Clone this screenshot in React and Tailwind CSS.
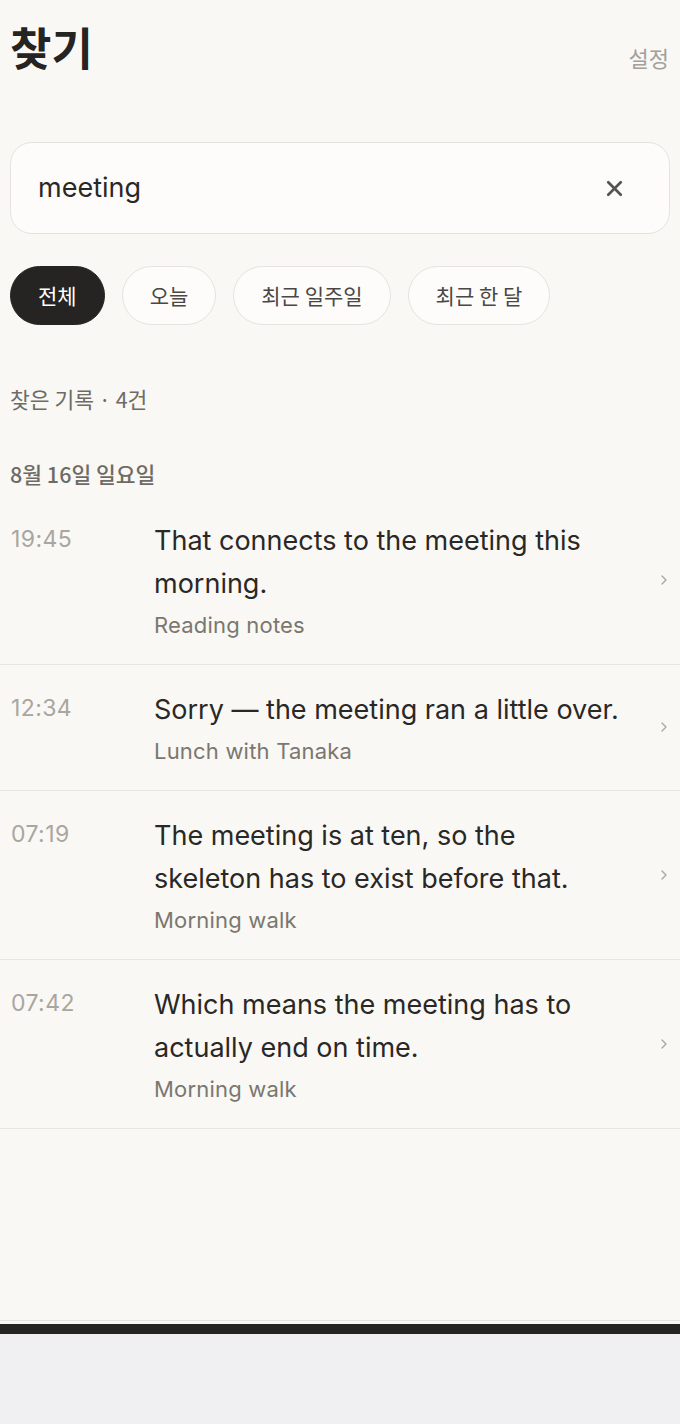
import { X, ChevronRight } from 'lucide-react';

const FILTERS = ['전체', '오늘', '최근 일주일', '최근 한 달'];

const RESULTS = [
    { time: '19:45', text: 'That connects to the meeting this morning.', source: 'Reading notes' },
    { time: '12:34', text: 'Sorry — the meeting ran a little over.', source: 'Lunch with Tanaka' },
    { time: '07:19', text: 'The meeting is at ten, so the skeleton has to exist before that.', source: 'Morning walk' },
    { time: '07:42', text: 'Which means the meeting has to actually end on time.', source: 'Morning walk' },
];

export default function App() {
    return (
        <div className="bg-[#f0eff2] min-h-[1424px] font-['Inter','Noto_Sans_CJK_KR',sans-serif]">
            <div className="bg-[#f9f8f4] min-h-[1320px] flex flex-col">
                {/* Header */}
                <div className="flex items-end justify-between px-[10px] pt-[18px]">
                    <h1 className="text-[45px] leading-[58px] font-bold text-[#262422] font-['Noto_Sans_CJK_KR',sans-serif]">찾기</h1>
                    <button className="text-[22px] leading-[30px] text-[#a3a09a] mr-[1px] mb-[4px] font-['Noto_Sans_CJK_KR',sans-serif]">설정</button>
                </div>

                {/* Search */}
                <div className="mx-[10px] mt-[66px] h-[92px] rounded-[22px] border border-[#e6e3de] bg-[#fdfcfa] flex items-center pl-[27px] pr-[42px]">
                    <span className="flex-1 text-[27px] text-[#2a2826]">meeting</span>
                    <X className="w-[25px] h-[25px] text-[#555350]" strokeWidth={2.6} />
                </div>

                {/* Filter chips */}
                <div className="flex gap-[17px] px-[10px] mt-[32px]">
                    {FILTERS.map((f, i) => (
                        <button
                            key={f}
                            className={`h-[59px] px-[27px] rounded-full text-[21px] font-['Noto_Sans_CJK_KR',sans-serif] ${
                                i === 0
                                    ? 'bg-[#262422] text-white border border-[#262422]'
                                    : 'bg-[#fdfcfa] text-[#4a4844] border border-[#e6e3de]'
                            }`}
                        >
                            {f}
                        </button>
                    ))}
                </div>

                <p className="px-[10px] mt-[60px] text-[21.5px] leading-[28px] text-[#6e6b65] font-['Noto_Sans_CJK_KR',sans-serif]">
                    찾은 기록 · 4건
                </p>

                <p className="px-[10px] mt-[47px] text-[21.5px] leading-[28px] font-medium text-[#6e6b65] font-['Noto_Sans_CJK_KR',sans-serif]">
                    8월 16일 일요일
                </p>

                {/* Result list */}
                <div className="mt-[8px]">
                    {RESULTS.map((r) => (
                        <ResultRow key={r.time + r.source} {...r} />
                    ))}
                </div>
            </div>
            <div className="h-[4px] bg-[#f9f8f4] border-t border-[#e6e4df]" />
            <div className="h-[10px] bg-[#262422]" />
        </div>
    );
}

const ResultRow = ({ time, text, source }) => (
    <div className="flex items-center border-b border-[#e8e6e1] pl-[11px] pr-[8px] pt-[23px] pb-[24px]">
        <span className="w-[143px] self-start text-[23px] leading-[40px] tracking-[0.4px] text-[#a9a6a0] shrink-0">{time}</span>
        <div className="flex-1 pr-[33px]">
            <p className="text-[27px] leading-[43px] text-[#2a2826]">{text}</p>
            <p className="text-[22px] leading-[30px] mt-[5px] tracking-[0.2px] text-[#7a7770]">{source}</p>
        </div>
        <ChevronRight className="w-[16px] h-[16px] text-[#aaa7a1] shrink-0" strokeWidth={2} />
    </div>
);
